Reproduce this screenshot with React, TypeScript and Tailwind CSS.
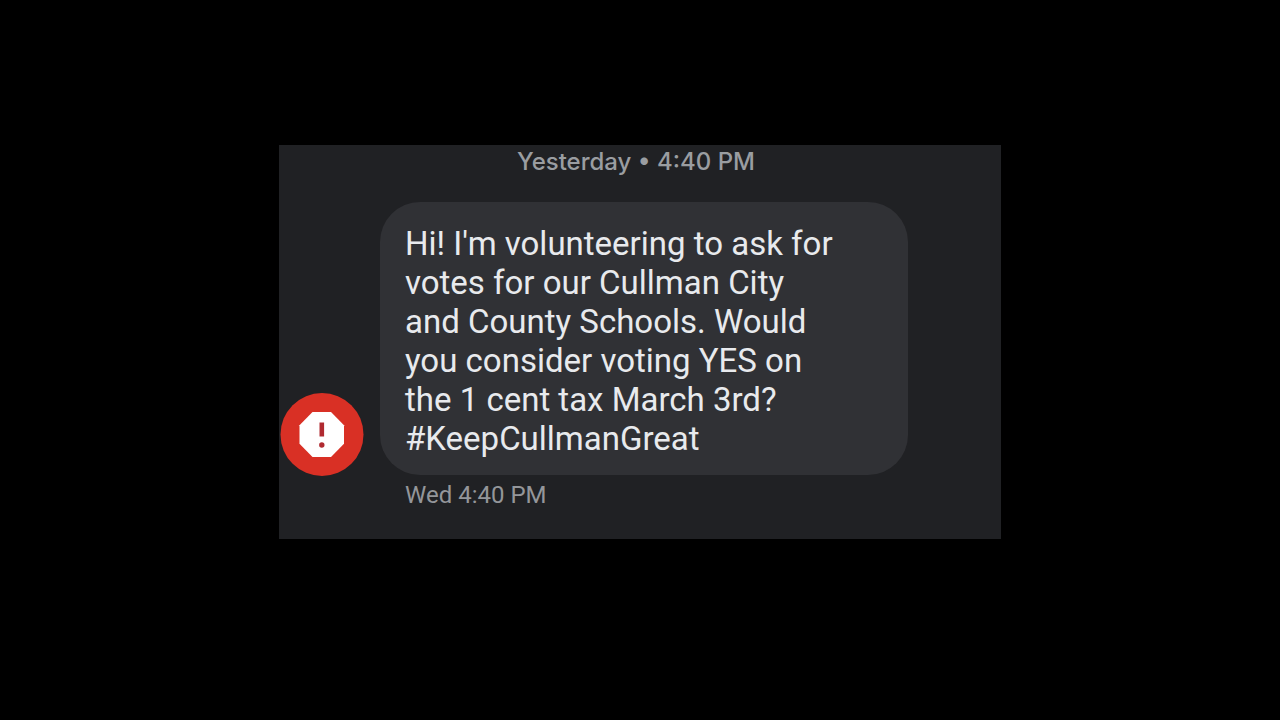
const message = [
  "Hi! I'm volunteering to ask for",
  "votes for our Cullman City",
  "and County Schools. Would",
  "you consider voting YES on",
  "the 1 cent tax March 3rd?",
  "#KeepCullmanGreat",
];

const SpamAvatar = () => {
  return (
    <svg
      viewBox="0 0 84 84"
      className="size-21 shrink-0 overflow-visible"
      role="img"
      aria-label="Spam"
    >
      <circle cx="42" cy="43.5" r="41.5" fill="#d93025" />
      <path
        d="M32.5 21H51L64 34.2v18.600L51 66H32.5L19.5 52.800V34.200z"
        fill="#ffffff"
      />
      <path d="M39.5 31.5h4.600v14h-4.600z" fill="#b02a30" />
      <circle cx="41.8" cy="54" r="2.7" fill="#b02a30" />
    </svg>
  );
};

const App = () => {
  return (
    <div className="min-h-screen bg-black flex items-center justify-center font-['Roboto',sans-serif]">
      <main className="w-full max-w-[722px] bg-[#202124] pb-7 mt-[-36px]">
        <p className="pr-2 text-center font-['Inter',sans-serif] font-medium text-2xl leading-[33px] text-[#9a9da1]">
          Yesterday • 4:40 PM
        </p>
        <div className="mt-6 flex items-end gap-4 px-px">
          <SpamAvatar />
          <p className="w-full max-w-[528px] rounded-[40px] bg-[#303135] px-[25px] pt-[22px] pb-[17px] text-[33px] leading-[39px] text-[#e8eaed]">
            {message.map((line) => (
              <span key={line} className="block">
                {line}
              </span>
            ))}
          </p>
        </div>
        <p className="ml-[126px] mt-1 text-2xl leading-8 text-[#94969a]">
          Wed 4:40 PM
        </p>
      </main>
    </div>
  );
};

export default App;
